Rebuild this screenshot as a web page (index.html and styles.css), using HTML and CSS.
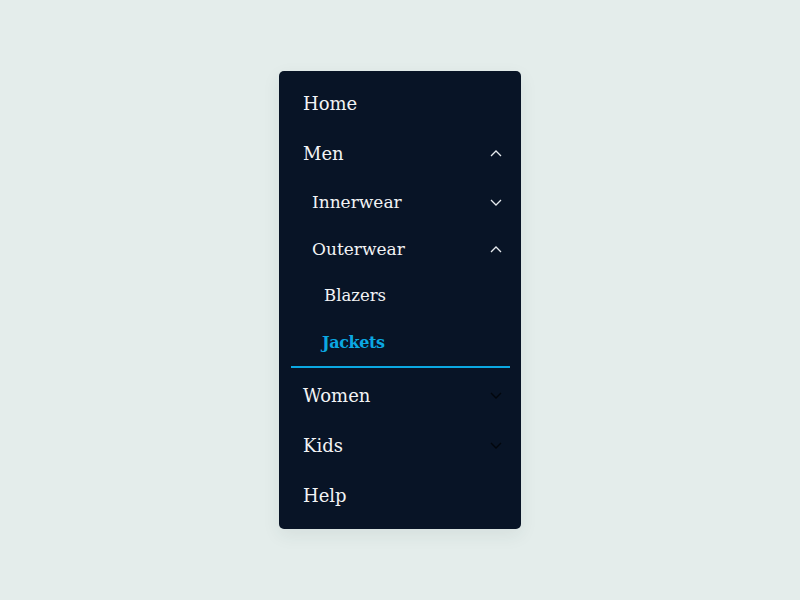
FILE: index.html
```html
<!DOCTYPE html>
<html lang="en">
<head>
<meta charset="utf-8">
<title>Menu</title>
<link rel="stylesheet" href="styles.css">
</head>
<body>
<nav class="menu">
  <div class="row top"><span>Home</span></div>
  <div class="row top"><span>Men</span>
    <svg class="chev up" viewBox="0 0 12 7" width="12" height="7"><polyline points="1,6 6,1 11,6"/></svg>
  </div>
  <div class="sub">
    <div class="row s1 h48"><span>Innerwear</span>
      <svg class="chev" viewBox="0 0 12 7" width="12" height="7"><polyline points="1,1 6,6 11,1"/></svg>
    </div>
    <div class="row s1 h46"><span>Outerwear</span>
      <svg class="chev up" viewBox="0 0 12 7" width="12" height="7"><polyline points="1,6 6,1 11,6"/></svg>
    </div>
    <div class="row s2 h46"><span>Blazers</span></div>
    <div class="row s2 h48 active"><span>Jackets</span></div>
  </div>
  <div class="row top"><span>Women</span>
    <svg class="chev dark" viewBox="0 0 12 7" width="12" height="7"><polyline points="1,1 6,6 11,1"/></svg>
  </div>
  <div class="row top"><span>Kids</span>
    <svg class="chev dark" viewBox="0 0 12 7" width="12" height="7"><polyline points="1,1 6,6 11,1"/></svg>
  </div>
  <div class="row top"><span>Help</span></div>
</nav>
</body>
</html>
```

FILE: styles.css
```css
html, body {
  margin: 0;
  padding: 0;
}
body {
  background: #e4edeb;
  width: 800px;
  height: 600px;
  display: flex;
  justify-content: center;
  align-items: flex-start;
  font-family: "DejaVu Serif", "Liberation Serif", serif;
}
.menu {
  margin-top: 71px;
  width: 242px;
  box-sizing: border-box;
  padding: 7px 11px 9px 12px;
  background: #081426;
  border-radius: 5px;
  box-shadow: 0 6px 18px rgba(40, 70, 70, 0.08);
  color: #f2f3f5;
}
.row {
  display: flex;
  align-items: center;
  justify-content: space-between;
  padding-left: 12px;
  padding-right: 8px;
  box-sizing: border-box;
}
.top {
  height: 50px;
  font-size: 18px;
}
.s1 {
  padding-left: 21px;
  font-size: 17px;
}
.s2 {
  padding-left: 33px;
  font-size: 16.5px;
}
.h48 { height: 48px; }
.h46 { height: 46px; }
.active {
  color: #0ba8e2;
  font-weight: bold;
  font-size: 16px;
  letter-spacing: -0.4px;
  padding-left: 31px;
  border-bottom: 2px solid #0ba8e2;
  margin-bottom: 2px;
  height: 50px;
}
.chev {
  display: block;
  fill: none;
  stroke: #e6eaee;
  stroke-width: 1.3;
}
.chev.dark {
  stroke: #02060c;
}
```
